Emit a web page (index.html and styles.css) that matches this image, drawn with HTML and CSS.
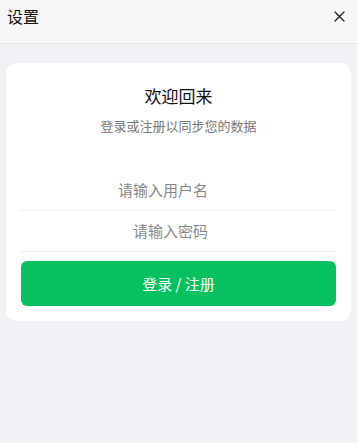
FILE: index.html
```html
<!DOCTYPE html>
<html lang="zh-CN">
<head>
  <meta charset="UTF-8" />
  <meta name="viewport" content="width=device-width, initial-scale=1">
  <title>设置</title>
  <link rel="stylesheet" href="styles.css">
</head>
<body>
  <header class="topbar">
    <h1>设置</h1>
    <button class="close-btn" aria-label="关闭">
      <svg width="11" height="11" viewBox="0 0 11 11">
        <path d="M1 1 L10 10 M10 1 L1 10" stroke="#222" stroke-width="1.3" stroke-linecap="round" />
      </svg>
    </button>
  </header>

  <div class="container">
    <div class="login-card">
      <h2>欢迎回来</h2>
      <p class="subtitle">登录或注册以同步您的数据</p>
      <form class="login-form">
        <input type="text" placeholder="请输入用户名">
        <input type="password" placeholder="请输入密码">
        <button type="button" class="login-btn">登录 / 注册</button>
      </form>
    </div>
  </div>
</body>
</html>
```

FILE: styles.css
```css
/* Global */
body {
  margin: 0;
  padding: 0;
  font-family: "Noto Sans CJK SC", "Noto Sans", sans-serif;
  background-color: #f2f1f6;
  color: #111;
  min-height: 100vh;
}
/* Top bar */
.topbar {
  height: 43px;
  background-color: #f7f7f7;
  border-bottom: 1px solid #e6e6e6;
  display: flex;
  align-items: flex-start;
  justify-content: space-between;
  padding: 0 7px;
}
.topbar h1 {
  margin: 0;
  font-size: 16px;
  font-weight: 400;
  line-height: 32px;
}
.close-btn {
  background: none;
  border: none;
  padding: 0;
  margin: 11px 5px 0 0;
  width: 11px;
  height: 11px;
  display: flex;
  cursor: pointer;
}
/* Card */
.container {
  padding: 19px 6px;
}
.login-card {
  background: #fff;
  border-radius: 10px;
  padding: 21px 15px 15px;
  text-align: center;
}
.login-card h2 {
  margin: 0;
  font-size: 17px;
  font-weight: 400;
  line-height: 24px;
}
.subtitle {
  margin: 9px 0 0;
  font-size: 13px;
  line-height: 18px;
  color: #777;
}
/* Form */
.login-form {
  margin-top: 35px;
  display: flex;
  flex-direction: column;
}
.login-form input {
  box-sizing: border-box;
  border: none;
  border-bottom: 1px solid #eee;
  height: 41px;
  padding: 0 128px 2px 0;
  font-family: inherit;
  font-size: 15px;
  text-align: right;
  outline: none;
  background: transparent;
}
.login-form input::placeholder {
  color: #888;
}
.login-btn {
  margin-top: 9px;
  height: 45px;
  border: none;
  border-radius: 6px;
  background-color: #07c160;
  color: #fff;
  font-family: inherit;
  font-size: 15px;
  cursor: pointer;
}
```
